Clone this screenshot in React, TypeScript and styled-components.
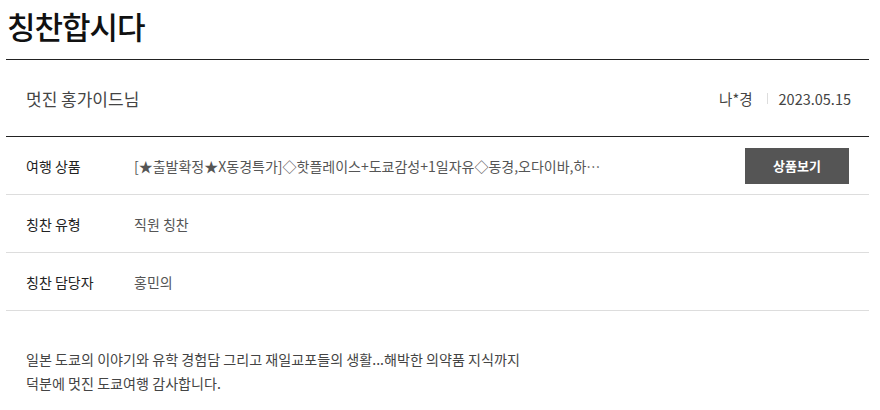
import React from "react";
import styled, { createGlobalStyle } from "styled-components";

const GlobalStyle = createGlobalStyle`
  body {
    margin: 0;
    background: #fff;
    font-family: "Noto Sans CJK KR", "Noto Sans", sans-serif;
    color: #333;
  }
`;

const Page = styled.div`
  width: 863px;
  padding-left: 6px;
`;

const Title = styled.h1`
  margin: 0;
  height: 59px;
  padding-left: 1px;
  font-size: 31px;
  font-weight: 500;
  line-height: 52px;
  letter-spacing: -1px;
  color: #111;
  border-bottom: 1px solid #222;
`;

const AuthorRow = styled.div`
  display: flex;
  align-items: center;
  justify-content: space-between;
  height: 76px;
  padding: 0 18px 0 20px;
  border-bottom: 1px solid #222;
`;

const AuthorName = styled.span`
  font-size: 17px;
  color: #444;
`;

const Meta = styled.div`
  display: flex;
  align-items: center;
  font-size: 14.5px;
  color: #444;
`;

const MetaItem = styled.span<{ $divider?: boolean }>`
  display: flex;
  align-items: center;
  &::before {
    content: "";
    display: ${({ $divider }) => ($divider ? "block" : "none")};
    width: 1px;
    height: 11px;
    background: #ddd;
    margin: 0 11px 0 14px;
  }
`;

const InfoRow = styled.div`
  display: flex;
  align-items: center;
  height: 57px;
  padding: 0 20px;
  border-bottom: 1px solid #ddd;
`;

const Label = styled.span`
  width: 108px;
  flex-shrink: 0;
  font-size: 14px;
  color: #222;
`;

const Value = styled.span`
  flex: 1;
  min-width: 0;
  font-size: 14px;
  color: #555;
  white-space: nowrap;
`;

const ProductButton = styled.button`
  width: 104px;
  height: 36px;
  flex-shrink: 0;
  border: none;
  background: #555;
  color: #fff;
  font-family: inherit;
  font-size: 13px;
  font-weight: 700;
  cursor: pointer;
`;

const Body = styled.div`
  padding: 36px 20px 0;
  font-size: 14.1px;
  line-height: 24px;
  color: #444;
`;

const rows = [
  {
    label: "여행 상품",
    value: "[★출발확정★X동경특가]◇핫플레이스+도쿄감성+1일자유◇동경,오다이바,하…",
    button: true,
  },
  { label: "칭찬 유형", value: "직원 칭찬" },
  { label: "칭찬 담당자", value: "홍민의" },
];

const App = () => {
  return (
    <>
      <GlobalStyle />
      <Page>
        <Title>칭찬합시다</Title>
        <AuthorRow>
          <AuthorName>멋진 홍가이드님</AuthorName>
          <Meta>
            <MetaItem>나*경</MetaItem>
            <MetaItem $divider>2023.05.15</MetaItem>
          </Meta>
        </AuthorRow>
        {rows.map((row) => (
          <InfoRow key={row.label}>
            <Label>{row.label}</Label>
            <Value>{row.value}</Value>
            {row.button && <ProductButton>상품보기</ProductButton>}
          </InfoRow>
        ))}
        <Body>
          일본 도쿄의 이야기와 유학 경험담 그리고 재일교포들의 생활...해박한 의약품 지식까지
          <br />
          덕분에 멋진 도쿄여행 감사합니다.
        </Body>
      </Page>
    </>
  );
};

export default App;
